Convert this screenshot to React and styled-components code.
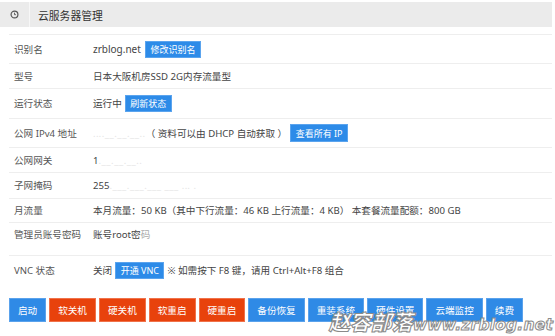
import React from 'react';
import styled, { createGlobalStyle } from 'styled-components';

const GlobalStyle = createGlobalStyle`
  html, body {
    margin: 0;
    padding: 0;
    background: #fff;
  }
  body {
    font-family: "Noto Sans", "Noto Sans CJK SC", sans-serif;
    color: #444;
  }
`;

const Page = styled.div`
  position: relative;
  width: 555px;
  height: 336px;
  overflow: hidden;
  padding-top: 2px;
  box-sizing: border-box;
`;

const Panel = styled.div`
  width: 552px;
`;

const Header = styled.div`
  display: flex;
  align-items: center;
  height: 25px;
  background: #ebebeb;
`;

const HeaderIcon = styled.div`
  width: 30px;
  height: 100%;
  display: flex;
  align-items: center;
  justify-content: center;
  border-right: 1px solid #f7f7f7;
  box-sizing: border-box;
`;

const Title = styled.div`
  padding-left: 8px;
  font-size: 10.8px;
  color: #333;
`;

const Body = styled.div`
  padding: 7px 0 0 9px;
`;

const Table = styled.div`
  border-top: 1px solid #eeeeee;
`;

const Row = styled.div`
  display: flex;
  align-items: ${(p) => (p.top ? 'flex-start' : 'center')};
  min-height: ${(p) => p.h}px;
  box-sizing: border-box;
  border-bottom: ${(p) => (p.last ? 'none' : '1px solid #eeeeee')};
  padding-top: ${(p) => (p.top ? 5 : 0)}px;
  font-size: 9.6px;
  line-height: 13px;
`;

const Label = styled.div`
  width: 79px;
  padding-left: 5px;
  color: #555;
  flex-shrink: 0;
`;

const Value = styled.div`
  display: flex;
  align-items: center;
  gap: 3px;
  color: #444;
  white-space: nowrap;
`;

const Site = styled.span`
  font-size: 10px;
  margin-right: 1px;
`;

const Masked = styled.span`
  color: #e4e4e4;
  letter-spacing: 0.5px;
`;

const Faded = styled.span`
  color: #aaa;
`;

const SmallButton = styled.span`
  display: inline-flex;
  align-items: center;
  height: ${(p) => p.h || 17}px;
  padding: 0 4.5px;
  background: #2d8be8;
  color: #fff;
  font-size: 9px;
  border: 1px solid #5ba4ee;
  box-sizing: border-box;
`;

const ActionBar = styled.div`
  display: flex;
  gap: 3px;
  padding: 13px 0 0 9px;
`;

const ActionButton = styled.span`
  display: inline-flex;
  align-items: center;
  height: 24px;
  padding: 0 8px;
  font-size: 9.6px;
  color: #fff;
  background: ${(p) => (p.danger ? '#e8420c' : '#2f8ae6')};
  border: 1px solid ${(p) => (p.danger ? '#f0724a' : '#5aa2ec')};
  box-sizing: border-box;
`;

const Watermark = styled.div`
  position: absolute;
  right: 2px;
  bottom: 0;
  display: flex;
  align-items: baseline;
  font-weight: 900;
  font-style: italic;
  color: #fff;
  -webkit-text-stroke: 1px #8a8a8a;
  white-space: nowrap;
`;

const MarkCn = styled.span`
  font-family: "Noto Sans CJK SC", sans-serif;
  font-size: 21px;
`;

const MarkEn = styled.span`
  font-family: "DejaVu Sans", sans-serif;
  font-size: 15.5px;
  letter-spacing: 0.2px;
`;

const ClockIcon = () => (
  <svg width="9" height="9" viewBox="0 0 10 10">
    <circle cx="5" cy="5" r="3.8" fill="none" stroke="#555" strokeWidth="1.3" />
    <path d="M5 3v2.2h1.6" fill="none" stroke="#555" strokeWidth="1" />
  </svg>
);

const actions = [
  { text: '启动' },
  { text: '软关机', danger: true },
  { text: '硬关机', danger: true },
  { text: '软重启', danger: true },
  { text: '硬重启', danger: true },
  { text: '备份恢复' },
  { text: '重装系统' },
  { text: '硬件设置' },
  { text: '云端监控' },
  { text: '续费' },
];

export default function App() {
  return (
    <Page>
      <GlobalStyle />
      <Panel>
        <Header>
          <HeaderIcon>
            <ClockIcon />
          </HeaderIcon>
          <Title>云服务器管理</Title>
        </Header>
        <Body>
          <Table>
            <Row h={29}>
              <Label>识别名</Label>
              <Value>
                <Site>zrblog.net</Site>
                <SmallButton>修改识别名</SmallButton>
              </Value>
            </Row>
            <Row h={25}>
              <Label>型号</Label>
              <Value>日本大阪机房SSD 2G内存流量型</Value>
            </Row>
            <Row h={30}>
              <Label>运行状态</Label>
              <Value>
                运行中
                <SmallButton>刷新状态</SmallButton>
              </Value>
            </Row>
            <Row h={29}>
              <Label>公网 IPv4 地址</Label>
              <Value>
                <span>
                  <Masked>.‥.__.__.__..</Masked>（ 资料可以由 DHCP 自动获取 ）
                </span>
                <SmallButton h={18}>查看所有 IP</SmallButton>
              </Value>
            </Row>
            <Row h={25}>
              <Label>公网网关</Label>
              <Value>
                <span>
                  1<Masked>.__.__.__..</Masked>
                </span>
              </Value>
            </Row>
            <Row h={26}>
              <Label>子网掩码</Label>
              <Value>
                <span>
                  255<Masked>.___.___.___ ___ .‥ .</Masked>
                </span>
              </Value>
            </Row>
            <Row h={24}>
              <Label>月流量</Label>
              <Value>本月流量：50 KB（其中下行流量：46 KB 上行流量：4 KB） 本套餐流量配额：800 GB</Value>
            </Row>
            <Row h={33} top>
              <Label>管理员账号密码</Label>
              <Value>
                <span>
                  账号root密<Faded>码</Faded>
                </span>
              </Value>
            </Row>
            <Row h={29} last>
              <Label>VNC 状态</Label>
              <Value>
                关闭
                <SmallButton>开通 VNC</SmallButton>
                <span>※ 如需按下 F8 键，请用 Ctrl+Alt+F8 组合</span>
              </Value>
            </Row>
          </Table>
        </Body>
        <ActionBar>
          {actions.map((a) => (
            <ActionButton key={a.text} danger={a.danger}>
              {a.text}
            </ActionButton>
          ))}
        </ActionBar>
      </Panel>
      <Watermark>
        <MarkCn>赵容部落</MarkCn>
        <MarkEn>www.zrblog.net</MarkEn>
      </Watermark>
    </Page>
  );
}
